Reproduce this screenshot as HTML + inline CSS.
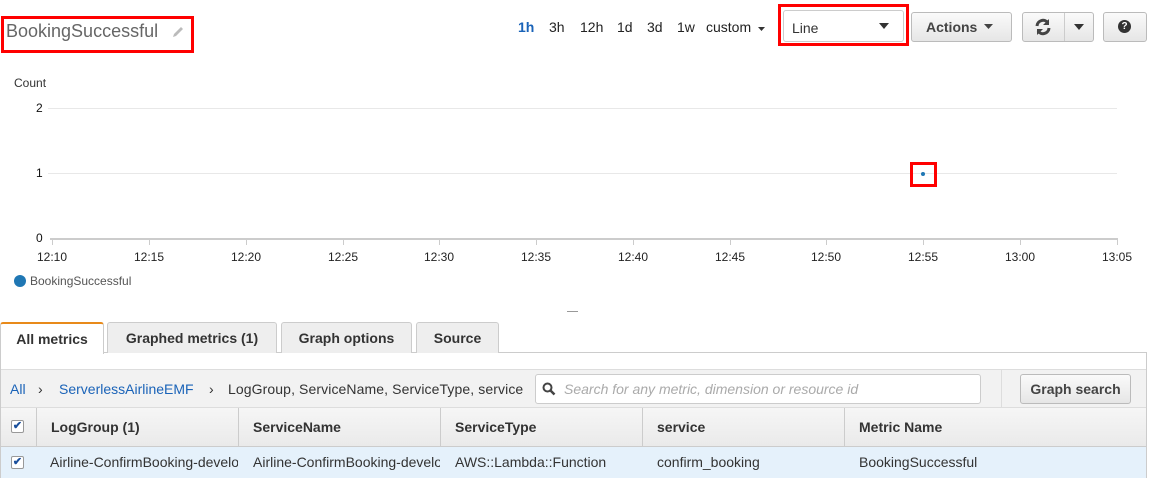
<!DOCTYPE html>
<html><head><style>
*{box-sizing:border-box;margin:0;padding:0}
body{width:1149px;height:478px;background:#fff;font-family:"Liberation Sans",Arial,sans-serif;position:relative;overflow:hidden;color:#333}
.a{position:absolute}
.btn{position:absolute;border:1px solid #bbb;border-radius:3px;background:linear-gradient(#fafafa,#e6e6e6);font-weight:bold;font-size:14px;color:#444;text-align:center}
.red{position:absolute;border:3px solid #f00}
.tl{position:absolute;top:240px;font-size:12px;color:#222;width:50px;text-align:center;margin-left:-25px}
.tab{position:absolute;top:322px;height:31px;border:1px solid #ccc;border-bottom:none;background:#eee;border-radius:3px 3px 0 0;font-size:14px;font-weight:bold;color:#333;text-align:center;line-height:31px}
.th{position:absolute;top:408px;height:39px;font-size:14px;font-weight:bold;color:#333;line-height:39px;border-left:1px solid #ccc;padding-left:14px}
.td{position:absolute;top:447px;height:31px;font-size:14px;color:#333;line-height:31px;padding-left:12px;overflow:hidden;white-space:nowrap}
.cb{position:absolute;width:13px;height:13px;border:1px solid #999;border-radius:2px;background:#fff;color:#1a4f9c;font-size:11px;line-height:11px;text-align:center;font-weight:bold}
.bc{position:absolute;top:381px;font-size:14px;color:#333;white-space:nowrap}
</style></head><body>
<div class="red" style="left:1px;top:16px;width:193px;height:37px"></div>
<div class="a" style="left:6px;top:21px;font-size:18px;color:#666">BookingSuccessful</div>
<svg class="a" style="left:171px;top:25px" width="14" height="14" viewBox="0 0 14 14"><path d="M2 12l1-3 7-7 2 2-7 7z" fill="#bbb"/></svg>

<div class="a" style="top:19px;left:518px;font-size:14px;color:#1a63b8;font-weight:bold">1h</div>
<div class="a" style="top:19px;left:549px;font-size:14px;color:#222">3h</div>
<div class="a" style="top:19px;left:580px;font-size:14px;color:#222">12h</div>
<div class="a" style="top:19px;left:617px;font-size:14px;color:#222">1d</div>
<div class="a" style="top:19px;left:647px;font-size:14px;color:#222">3d</div>
<div class="a" style="top:19px;left:677px;font-size:14px;color:#222">1w</div>
<div class="a" style="top:19px;left:706px;font-size:14px;color:#222">custom</div>
<svg class="a" style="left:758px;top:27px" width="7" height="4"><path d="M0 0h7L3.5 4z" fill="#333"/></svg>

<div class="a" style="left:783px;top:10px;width:121px;height:32px;border:1px solid #ccc;border-radius:3px"></div>
<div class="a" style="left:792px;top:20px;font-size:14px;color:#333">Line</div>
<svg class="a" style="left:879px;top:23px" width="10" height="6"><path d="M0 0h10L5 6z" fill="#333"/></svg>
<div class="red" style="left:778px;top:4px;width:131px;height:42px"></div>

<div class="btn" style="left:911px;top:12px;width:101px;height:30px"></div>
<div class="a" style="left:926px;top:19px;font-size:14px;font-weight:bold;color:#444">Actions</div>
<svg class="a" style="left:984px;top:24px" width="9" height="5"><path d="M0 0h9L4.5 5z" fill="#444"/></svg>
<div class="btn" style="left:1022px;top:12px;width:72px;height:30px"></div>
<div class="a" style="left:1064px;top:13px;width:1px;height:28px;background:#ccc"></div>
<svg class="a" style="left:1034px;top:18px" width="18" height="18" viewBox="0 0 18 18"><path d="M3 8a6 6 0 0 1 11-3M15 10a6 6 0 0 1-11 3" stroke="#444" stroke-width="3" fill="none"/><path d="M15 1v6h-6z M3 17v-6h6z" fill="#444"/></svg>
<svg class="a" style="left:1074px;top:24px" width="10" height="6"><path d="M0 0h10L5 6z" fill="#333"/></svg>
<div class="btn" style="left:1103px;top:12px;width:44px;height:30px"></div>
<div class="a" style="left:1118px;top:20px;width:13px;height:13px;border-radius:50%;background:#333;color:#fff;font-size:10px;font-weight:bold;text-align:center;line-height:13px">?</div>

<div class="a" style="left:14px;top:76px;font-size:12px;color:#333">Count</div>
<div class="a" style="left:36px;top:101px;font-size:12px;color:#111">2</div>
<div class="a" style="left:36px;top:166px;font-size:12px;color:#111">1</div>
<div class="a" style="left:36px;top:231px;font-size:12px;color:#111">0</div>
<div class="a" style="left:48px;top:108px;width:1069px;height:1px;background:#e8e8e8"></div>
<div class="a" style="left:48px;top:173px;width:1069px;height:1px;background:#e8e8e8"></div>
<div class="a" style="left:50px;top:238px;width:1068px;height:2px;background:#ccc"></div>
<svg class="a" style="left:0;top:240px" width="1149" height="6"><g stroke="#ccc"><path d="M52.5 0v5M149.5 0v5M246.5 0v5M343.5 0v5M439.5 0v5M536.5 0v5M633.5 0v5M730.5 0v5M826.5 0v5M923.5 0v5M1020.5 0v5M1117.5 0v5"/></g></svg>
<div class="tl" style="left:52px;top:250px">12:10</div>
<div class="tl" style="left:149px;top:250px">12:15</div>
<div class="tl" style="left:246px;top:250px">12:20</div>
<div class="tl" style="left:343px;top:250px">12:25</div>
<div class="tl" style="left:439px;top:250px">12:30</div>
<div class="tl" style="left:536px;top:250px">12:35</div>
<div class="tl" style="left:633px;top:250px">12:40</div>
<div class="tl" style="left:730px;top:250px">12:45</div>
<div class="tl" style="left:826px;top:250px">12:50</div>
<div class="tl" style="left:923px;top:250px">12:55</div>
<div class="tl" style="left:1020px;top:250px">13:00</div>
<div class="tl" style="left:1117px;top:250px">13:05</div>
<div class="a" style="left:921px;top:172px;width:4px;height:4px;border-radius:50%;background:#1f77b4"></div>
<div class="red" style="left:910px;top:162px;width:27px;height:25px"></div>
<div class="a" style="left:14px;top:275px;width:12px;height:12px;border-radius:50%;background:#1f77b4"></div>
<div class="a" style="left:30px;top:274px;font-size:12px;color:#555">BookingSuccessful</div>
<div class="a" style="left:567px;top:311px;width:11px;height:1px;background:#999"></div>

<div class="a" style="left:0;top:352px;width:1147px;height:126px;border:1px solid #ccc"></div>
<div class="tab" style="left:0;width:104px;background:#fff;border-top:2px solid #e88a1a;height:32px">All metrics</div>
<div class="tab" style="left:107px;width:170px">Graphed metrics (1)</div>
<div class="tab" style="left:281px;width:131px">Graph options</div>
<div class="tab" style="left:416px;width:83px">Source</div>
<div class="a" style="left:1px;top:369px;width:1145px;height:39px;background:#f2f2f2;border-top:1px solid #ddd;border-bottom:1px solid #ddd"></div>
<div class="bc" style="left:10px;color:#1a63b8">All</div>
<div class="bc" style="left:38px">›</div>
<div class="bc" style="left:59px;color:#1a63b8">ServerlessAirlineEMF</div>
<div class="bc" style="left:209px">›</div>
<div class="bc" style="left:228px;letter-spacing:0.1px">LogGroup, ServiceName, ServiceType, service</div>
<div class="a" style="left:535px;top:374px;width:446px;height:30px;background:#fff;border:1px solid #ccc;border-radius:3px"></div>
<svg class="a" style="left:542px;top:382px" width="14" height="14" viewBox="0 0 14 14"><circle cx="5.5" cy="5.5" r="4" stroke="#444" stroke-width="2" fill="none"/><path d="M8.5 8.5l4 4" stroke="#444" stroke-width="2.5"/></svg>
<div class="a" style="left:564px;top:381px;font-size:14px;color:#aaa;font-style:italic">Search for any metric, dimension or resource id</div>
<div class="a" style="left:1001px;top:370px;width:1px;height:38px;background:#ddd"></div>
<div class="btn" style="left:1020px;top:374px;width:111px;height:30px;line-height:28px">Graph search</div>
<div class="a" style="left:1px;top:408px;width:1145px;height:39px;background:linear-gradient(#f6f6f6,#eaeaea);border-bottom:1px solid #ccc"></div>
<div class="cb" style="left:11px;top:420px">✔</div>
<div class="th" style="left:36px;width:202px">LogGroup (1)</div>
<div class="th" style="left:238px;width:202px">ServiceName</div>
<div class="th" style="left:440px;width:202px">ServiceType</div>
<div class="th" style="left:642px;width:202px">service</div>
<div class="th" style="left:844px;width:302px">Metric Name</div>
<div class="a" style="left:1px;top:447px;width:1145px;height:31px;background:#e5f1fb"></div>
<div class="cb" style="left:11px;top:456px">✔</div>
<div class="td" style="left:38px;width:200px">Airline-ConfirmBooking-develop</div>
<div class="td" style="left:241px;width:199px">Airline-ConfirmBooking-develop</div>
<div class="td" style="left:443px;width:199px">AWS::Lambda::Function</div>
<div class="td" style="left:645px;width:199px">confirm_booking</div>
<div class="td" style="left:847px;width:299px">BookingSuccessful</div>
</body></html>
